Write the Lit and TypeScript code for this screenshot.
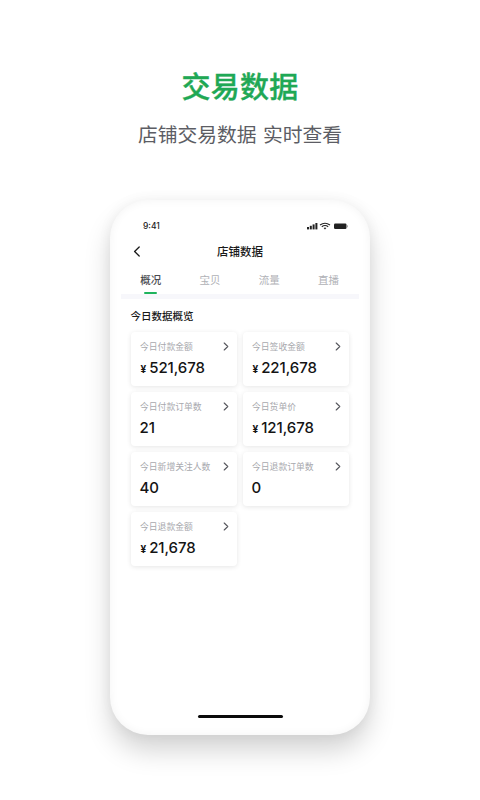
import { LitElement, html, css, svg } from "lit";
import { customElement } from "lit/decorators.js";

const CARDS: { label: string; value: string; yen: boolean }[] = [
  { label: "今日付款金额", value: "521,678", yen: true },
  { label: "今日签收金额", value: "221,678", yen: true },
  { label: "今日付款订单数", value: "21", yen: false },
  { label: "今日货单价", value: "121,678", yen: true },
  { label: "今日新增关注人数", value: "40", yen: false },
  { label: "今日退款订单数", value: "0", yen: false },
  { label: "今日退款金额", value: "21,678", yen: true },
];
const TABS = ["概况", "宝贝", "流量", "直播"];

const chevron = svg`<path d="M1.2 1 L4.8 4.5 L1.2 8" fill="none" stroke="#55565c" stroke-width="1.1" stroke-linecap="round" stroke-linejoin="round"/>`;

@customElement("app-root")
export class AppRoot extends LitElement {
  static styles = css`
    :host {
      display: block;
      width: 480px;
      height: 800px;
      overflow: hidden;
      background: #fff;
      font-family: Inter, "Noto Sans CJK SC", sans-serif;
      color: #111;
    }
    .head { display: flex; flex-direction: column; align-items: center; padding-top: 65px; }
    .title { font: 500 29px/40px "Noto Sans CJK SC", sans-serif; color: #1fa855; letter-spacing: 0.3px; -webkit-text-stroke: 0.35px #1fa855; }
    .sub { font: 400 19.8px/30px "Noto Sans CJK SC", sans-serif; color: #5c5d64; margin-top: 13.5px; word-spacing: 2px; }
    .phone {
      width: 260px;
      height: 535px;
      margin: 51.5px auto 0;
      border-radius: 38px;
      background: #fff;
      box-shadow: 0 16px 26px rgba(0,0,0,.17), 0 0 14px rgba(0,0,0,.05), inset 0 0 10px rgba(0,0,0,.05);
      display: flex;
      flex-direction: column;
      align-items: stretch;
    }
    .status { display: flex; justify-content: space-between; align-items: center; padding: 19px 21px 0 33px; height: 14px; }
    .time { font: 500 8.5px/14px Inter, sans-serif; color: #222; }
    .icons { display: block; }
    .nav { display: flex; align-items: center; justify-content: center; position: relative; height: 20px; margin-top: 8px; font: 500 11.5px/20px "Noto Sans CJK SC", sans-serif; color: #1a1a1a; }
    .back { position: absolute; left: 23px; top: 5px; }
    .tabs { display: grid; grid-template-columns: repeat(4, 59.3px); margin: 11px 0 0 11px; justify-content: start; }
    .tab { display: flex; flex-direction: column; align-items: center; font: 400 10.5px/16px "Noto Sans CJK SC", sans-serif; color: #b0b1b6; height: 22px; position: relative; }
    .tab.on { color: #4a4b50; font-weight: 500; }
    .tab.on::after { content: ""; width: 13px; height: 2px; border-radius: 1px; background: #1fb45d; position: absolute; bottom: 0; }
    .divider { height: 5px; margin: 0 11px; background: #f7f7fb; }
    .section { font: 500 10.5px/16px "Noto Sans CJK SC", sans-serif; color: #1a1a1a; margin: 8.5px 0 0 20.5px; }
    .grid { display: grid; grid-template-columns: 106px 106px; gap: 6px; margin: 8.5px 0 0 21px; }
    .card { height: 54px; box-sizing: border-box; border-radius: 4px; background: #fff; box-shadow: 0 1px 5px rgba(0,0,0,.1); padding: 7.5px 9px 0 9px; display: flex; flex-direction: column; }
    .row { display: flex; justify-content: space-between; align-items: center; height: 14px; }
    .label { font: 400 8.8px/14px "Noto Sans CJK SC", sans-serif; color: #a8a9ae; white-space: nowrap; }
    .row svg { margin-right: -1px; flex: none; }
    .val { font: 500 15px/20px Inter, sans-serif; color: #141414; margin: 4.5px 0 0 -0.5px; display: flex; align-items: baseline; letter-spacing: -0.05px; }
    .yen { font-size: 10px; font-weight: 700; margin: 0 3px 0 1px; }
    .spacer { flex: 1; }
    .home { width: 85px; height: 3px; border-radius: 2px; background: #0a0a0a; margin: 0 auto 17px; }
  `;

  render() {
    return html`
      <div class="head">
        <div class="title">交易数据</div>
        <div class="sub">店铺交易数据 实时查看</div>
      </div>
      <div class="phone">
        <div class="status">
          <span class="time">9:41</span>
          <svg class="icons" width="42" height="9" viewBox="0 0 42 9">
            <rect x="0" y="5" width="2" height="2.4" fill="#222"/>
            <rect x="2.8" y="3.8" width="2" height="3.6" fill="#222"/>
            <rect x="5.6" y="2.4" width="2" height="5" fill="#222"/>
            <rect x="8.4" y="1" width="2" height="6.4" fill="#222"/>
            <path d="M13 3 Q18 -0.6 23 3 M14.8 4.7 Q18 2.4 21.2 4.7" fill="none" stroke="#222" stroke-width="1.1"/>
            <path d="M16.6 5.9 L18 7.4 L19.4 5.9 Q18 5 16.6 5.9 Z" fill="#222"/>
            <rect x="27" y="1.5" width="12.5" height="5.5" rx="1.2" fill="#222"/>
            <rect x="40" y="3.3" width="1" height="2" fill="#aaa"/>
          </svg>
        </div>
        <div class="nav">
          <svg class="back" width="8" height="11" viewBox="0 0 8 11">
            <path d="M6.2 1 L1.6 5.5 L6.2 10" fill="none" stroke="#1a1a1a" stroke-width="1.3" stroke-linecap="round" stroke-linejoin="round"/>
          </svg>
          店铺数据
        </div>
        <div class="tabs">
          ${TABS.map((t, i) => html`<div class="tab ${i === 0 ? "on" : ""}">${t}</div>`)}
        </div>
        <div class="divider"></div>
        <div class="section">今日数据概览</div>
        <div class="grid">
          ${CARDS.map(
            (c) => html`<div class="card">
              <div class="row">
                <span class="label">${c.label}</span>
                <svg width="6" height="9" viewBox="0 0 6 9">${chevron}</svg>
              </div>
              <div class="val">${c.yen ? html`<span class="yen">¥</span>` : ""}${c.value}</div>
            </div>`
          )}
        </div>
        <div class="spacer"></div>
        <div class="home"></div>
      </div>
    `;
  }
}
